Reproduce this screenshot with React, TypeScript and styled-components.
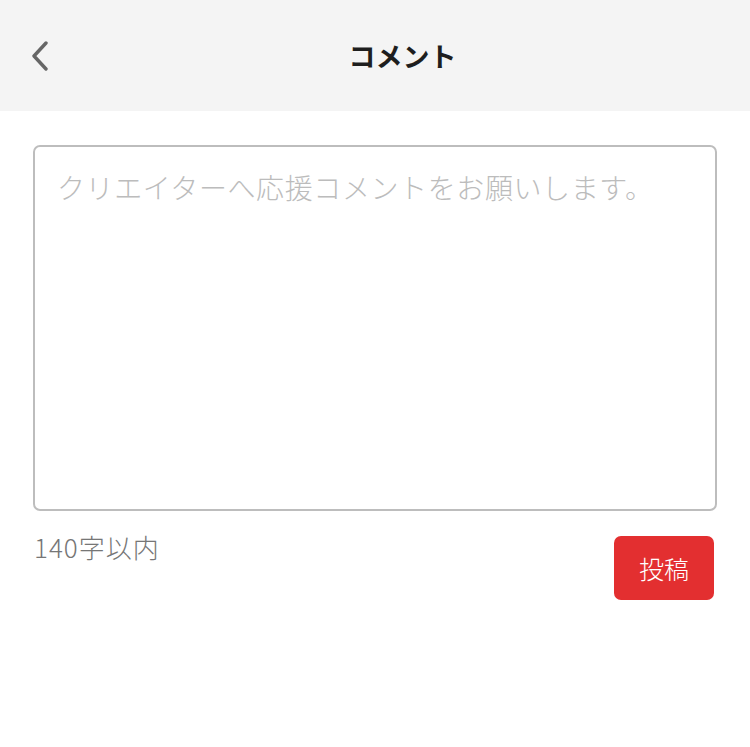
import styled, { createGlobalStyle } from "styled-components"

const GlobalStyle = createGlobalStyle`
	html, body {
		margin: 0;
		padding: 0;
		background: #ffffff;
		font-family: "Noto Sans CJK JP", "Noto Sans", sans-serif;
	}
`

const Page = styled.div`
	width: 750px;
	min-height: 747px;
	display: flex;
	flex-direction: column;
	background: #ffffff;
`

const Header = styled.header`
	height: 111px;
	background: #f4f4f4;
	display: flex;
	align-items: center;
`

const BackButton = styled.button`
	width: 55px;
	height: 111px;
	padding: 0 0 0 31px;
	border: none;
	background: transparent;
	display: flex;
	align-items: center;
	cursor: pointer;
`

const Title = styled.h1`
	flex: 1;
	margin: 0;
	text-align: center;
	font-size: 27px;
	font-weight: 700;
	color: #1e1e1e;
`

const Body = styled.main`
	padding: 34px 33px 0 33px;
	display: flex;
	flex-direction: column;
`

const TextArea = styled.textarea`
	box-sizing: border-box;
	width: 684px;
	height: 366px;
	padding: 19px 22px;
	border: 2px solid #bdbdbd;
	border-radius: 7px;
	resize: none;
	font-family: "Noto Sans CJK JP", "Noto Sans", sans-serif;
	font-size: 28px;
	font-weight: 300;
	letter-spacing: 0.6px;
	line-height: 42px;
	color: #333;
	outline: none;

	&::placeholder {
		color: #bcbcbc;
	}
`

const Footer = styled.div`
	display: flex;
	justify-content: space-between;
	align-items: flex-start;
	margin-top: 18px;
	padding-right: 3px;
`

const Counter = styled.span`
	padding-left: 1px;
	font-size: 26px;
	font-weight: 300;
	letter-spacing: 1px;
	line-height: 36px;
	color: #767676;
`

const PostButton = styled.button`
	width: 100px;
	height: 64px;
	margin-top: 7px;
	border: none;
	border-radius: 7px;
	background: #e32f30;
	color: #ffffff;
	font-family: "Noto Sans CJK JP", "Noto Sans", sans-serif;
	font-size: 25px;
	font-weight: 300;
	cursor: pointer;
`

const App = () => {
	return (
		<>
			<GlobalStyle />
			<Page>
				<Header>
					<BackButton aria-label="戻る">
						<svg width="18" height="30" viewBox="0 0 18 30" fill="none">
							<path d="M15 2 L3 15 L15 28" stroke="#666" strokeWidth="3.4" strokeLinecap="round" strokeLinejoin="round" />
						</svg>
					</BackButton>
					<Title>コメント</Title>
				</Header>
				<Body>
					<TextArea placeholder="クリエイターへ応援コメントをお願いします。" />
					<Footer>
						<Counter>140字以内</Counter>
						<PostButton>投稿</PostButton>
					</Footer>
				</Body>
			</Page>
		</>
	)
}

export default App
